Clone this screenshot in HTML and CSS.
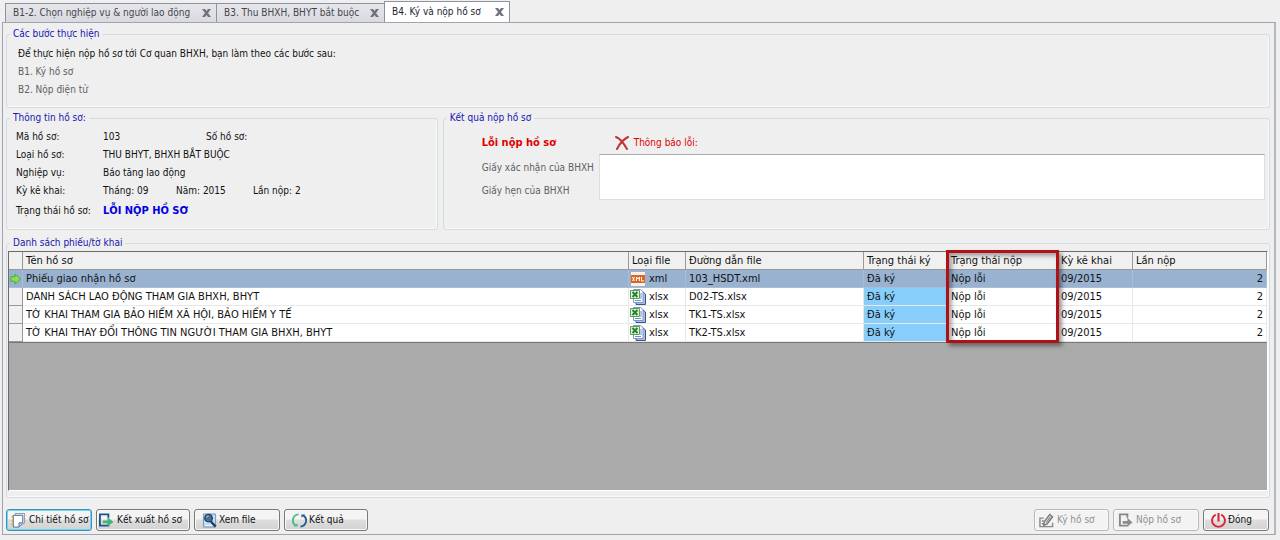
FILE: index.html
```html
<!DOCTYPE html>
<html lang="vi">
<head>
<meta charset="utf-8">
<title>Ký và nộp hồ sơ</title>
<link rel="stylesheet" href="styles.css">
</head>
<body>
<svg class="defs" aria-hidden="true">
  <symbol id="close" viewBox="0 0 9 8"><path d="M0 0h3l1.500 2L6 0h3L6 4l3 4H6L4.500 6 3 8H0l3-4z" fill="#70737f"/></symbol>
  <symbol id="excel" viewBox="0 0 16 16">
    <path d="M6 3h7l2.500 2v10.500H6z" fill="#a9bfe4" stroke="#35578f"/><path d="M3.500.5h7l2.500 2v11H3.500z" fill="#fff" stroke="#7f98c2"/>
    <path d="M10 5h2M10 7h2M10 9h2M5 11.500h6" stroke="#6d8fcb"/><path d="M.5 1.500h9v8h-9z" fill="#e3f2df" stroke="#5c9d55"/>
    <path d="M2.500 3l5 5M7.500 3l-5 5" stroke="#25822c" stroke-width="2"/>
  </symbol>
  <symbol id="xml" viewBox="0 0 16 16">
    <path d="M1 1h14v14H1z" fill="#f6f1ec"/><path d="M1 4h14v8H1z" fill="#e2631b"/>
    <path d="M2.500 6l2 4M4.500 6l-2 4M6.500 10V6l1.500 2 1.500-2v4M11.500 6v4H14" fill="none" stroke="#fff"/>
  </symbol>
</svg>
<main class="window">
  <nav class="tabs">
    <div class="tab"><a href="#b1">B1-2. Chọn nghiệp vụ &amp; người lao động</a><button class="tab-close" aria-label="Đóng thẻ B1-2"><svg><use href="#close"/></svg></button></div>
    <div class="tab"><a href="#b3">B3. Thu BHXH, BHYT bắt buộc</a><button class="tab-close" aria-label="Đóng thẻ B3"><svg><use href="#close"/></svg></button></div>
    <div class="tab active"><a href="#b4" aria-current="page">B4. Ký và nộp hồ sơ</a><button class="tab-close" aria-label="Đóng thẻ B4"><svg><use href="#close"/></svg></button></div>
  </nav>
  <section class="panel">
    <fieldset class="group steps">
      <legend>Các bước thực hiện</legend>
      <p class="intro">Để thực hiện nộp hồ sơ tới Cơ quan BHXH, bạn làm theo các bước sau:</p>
      <p>B1. Ký hồ sơ</p>
      <p>B2. Nộp điện tử</p>
    </fieldset>
    <div class="columns">
      <fieldset class="group info">
        <legend>Thông tin hồ sơ:</legend>
        <dl class="facts">
          <dt>Mã hồ sơ:</dt><dd class="number"><span>103</span><span>Số hồ sơ:</span></dd>
          <dt>Loại hồ sơ:</dt><dd>THU BHYT, BHXH BẮT BUỘC</dd>
          <dt>Nghiệp vụ:</dt><dd>Báo tăng lao động</dd>
          <dt>Kỳ kê khai:</dt><dd class="period"><span>Tháng: 09</span><span>Năm: 2015</span><span>Lần nộp: 2</span></dd>
          <dt>Trạng thái hồ sơ:</dt><dd class="status">LỖI NỘP HỒ SƠ</dd>
        </dl>
      </fieldset>
      <fieldset class="group result">
        <legend>Kết quả nộp hồ sơ</legend>
        <div class="result-grid">
          <strong class="failure">Lỗi nộp hồ sơ</strong>
          <label class="error-label" for="error"><svg viewBox="0 0 14 14"><path d="M1 1c3 1 7 5 11 12M13 1C9 3 5 7 2 13" fill="none" stroke="#bd3338" stroke-width="2" stroke-linecap="round"/></svg>Thông báo lỗi:</label>
          <span>Giấy xác nhận của BHXH</span>
          <textarea id="error"></textarea>
          <span>Giấy hẹn của BHXH</span>
        </div>
      </fieldset>
    </div>
    <section class="group list">
      <h2>Danh sách phiếu/tờ khai</h2>
      <div class="grid">
        <table>
          <colgroup><col class="c-mark"><col><col class="c-type"><col class="c-path"><col class="c-sign"><col class="c-send"><col class="c-term"><col class="c-count"></colgroup>
          <thead><tr><th></th><th>Tên hồ sơ</th><th>Loại file</th><th>Đường dẫn file</th><th>Trạng thái ký</th><th class="marked">Trạng thái nộp<span class="highlight"></span></th><th>Kỳ kê khai</th><th>Lần nộp</th></tr></thead>
          <tbody>
            <tr class="selected"><td><svg class="arrow" viewBox="0 0 12 12"><path d="M1 3.500h4.500v-3L11.500 6l-6 5.500v-3H1z" fill="#8cdc5c" stroke="#48a832"/></svg></td><td>Phiếu giao nhận hồ sơ</td><td><svg class="file"><use href="#xml"/></svg>xml</td><td>103_HSDT.xml</td><td>Đã ký</td><td>Nộp lỗi</td><td>09/2015</td><td>2</td></tr>
            <tr><td></td><td>DANH SÁCH LAO ĐỘNG THAM GIA BHXH, BHYT</td><td><svg class="file"><use href="#excel"/></svg>xlsx</td><td>D02-TS.xlsx</td><td>Đã ký</td><td>Nộp lỗi</td><td>09/2015</td><td>2</td></tr>
            <tr><td></td><td>TỜ KHAI THAM GIA BẢO HIỂM XÃ HỘI, BẢO HIỂM Y TẾ</td><td><svg class="file"><use href="#excel"/></svg>xlsx</td><td>TK1-TS.xlsx</td><td>Đã ký</td><td>Nộp lỗi</td><td>09/2015</td><td>2</td></tr>
            <tr><td></td><td>TỜ KHAI THAY ĐỔI THÔNG TIN NGƯỜI THAM GIA BHXH, BHYT</td><td><svg class="file"><use href="#excel"/></svg>xlsx</td><td>TK2-TS.xlsx</td><td>Đã ký</td><td>Nộp lỗi</td><td>09/2015</td><td>2</td></tr>
          </tbody>
        </table>
      </div>
    </section>
    <footer class="actions">
      <button class="btn focused detail"><svg viewBox="0 0 16 16"><path d="M4.500 2V.5h10v10l-2 2" fill="#e8eaee" stroke="#8a929f"/><path d="M2.500 2.500h10v8.500l-4 4h-6z" fill="#fff" stroke="#3f6ba6"/><path d="M12.500 10.500h-4v4" fill="#c9dcf2" stroke="#3f6ba6"/><path d="M1.500 3v11" stroke="#e2a83d" stroke-width="2" stroke-dasharray="2 2"/></svg>Chi tiết hồ sơ</button>
      <button class="btn export"><svg viewBox="0 0 16 16"><path d="M10 5V1.500H1v12h9V12" fill="none" stroke="#1c5789" stroke-width="2"/><path d="M4 8h5V4.500L15.500 9.500 9 14v-3H4z" fill="#43b478"/></svg>Kết xuất hồ sơ</button>
      <button class="btn view"><svg viewBox="0 0 16 16"><path d="M1.500 1h13v14h-13z" fill="#b9d4ed" stroke="#7196b7"/><path d="M3 4h10M3 7h10M3 10h10M3 13h10" stroke="#fff"/><circle cx="7" cy="5.500" r="4" fill="#416fa0" stroke="#273f5c" stroke-width="1.500"/><path d="M5 5a2 2 0 0 1 2-2" fill="none" stroke="#c8e5fb"/><path d="M9.500 9l5 5.500" stroke="#263d59" stroke-width="2.500"/></svg>Xem file</button>
      <button class="btn outcome"><svg viewBox="0 0 16 16"><path d="M7 1.500A6.500 6.500 0 0 0 4 13.500" fill="none" stroke="#4cbc83" stroke-width="2"/><path d="M9 14.500A6.500 6.500 0 0 0 12 2.500" fill="none" stroke="#285c9c" stroke-width="2"/><path d="M2 14.500h4V11z" fill="#4cbc83"/><path d="M14 1.500h-4V5z" fill="#285c9c"/></svg>Kết quả</button>
      <span class="spacer"></span>
      <button class="btn sign" disabled><svg viewBox="0 0 16 16"><path d="M5 5.500H1v9h13.500v-4M3 8.500h2M3 11.500h2" fill="none" stroke="#888" stroke-width="1.500"/><path d="M5.500 9.500l6-8 3 2.500-6 8-3.500 1z" fill="#ddd" stroke="#777" stroke-width="1.500"/><path d="M8 10l4-6" stroke="#777"/></svg>Ký hồ sơ</button>
      <button class="btn send" disabled><svg viewBox="0 0 16 16"><path d="M10 5V1.500H2v12h8V13" fill="none" stroke="#888" stroke-width="2"/><path d="M5 8.500h5V5l5.500 5L10 14.500v-3H5z" fill="#8c8c8c"/></svg>Nộp hồ sơ</button>
      <button class="btn quit"><svg viewBox="0 0 14 14"><path d="M4.500 1.500a6 6 0 1 0 5 0" fill="none" stroke="#dc2638" stroke-width="1.800"/><path d="M7 0v8" stroke="#dc2638" stroke-width="2"/></svg>Đóng</button>
    </footer>
  </section>
</main>
</body>
</html>
```
FILE: styles.css
```css
* { box-sizing: border-box; }
body {
  margin: 0;
  background: #efefef;
  color: #111;
  font: 10px/14px "DejaVu Sans Condensed", Tahoma, sans-serif;
}
p, dl, dd { margin: 0; }
button, textarea { font: inherit; }
.defs { position: absolute; width: 0; height: 0; }
.window { display: flex; flex-direction: column; min-height: 100vh; padding: 1px 4px 5px 2px; }

.tabs { display: flex; align-items: flex-end; height: 21px; padding-left: 3px; }
.tab {
  display: flex; align-items: center; justify-content: space-between;
  width: 211px; height: 19px; padding: 0 31px 0 7px;
  border: 1px solid #8d93a3; border-bottom: 0; border-right: 0;
  background: linear-gradient(#e6e6ea, #d9dae0);
  white-space: nowrap;
}
.tab { padding-right: 5px; }
.tab + .tab { width: 168px; }
.tab a { color: #44454d; text-decoration: none; }
.tab + .active { width: 126px; height: 21px; border-right: 1px solid #8d93a3; background: #fff; }
.active a { color: #1c2430; }
.tab-close { display: flex; margin-left: auto; padding: 0; border: 0; background: none; }
.tab-close svg { width: 9px; height: 8px; }

.panel {
  display: flex; flex: 1; flex-direction: column;
  padding: 4px 4px 3px 3px;
  border: 1px solid #a0a3b0; border-right: 2px solid #b4b6c0;
}
.group { min-width: 0; margin: 0; padding: 0; border: 1px solid #d3dce1; border-radius: 3px; box-shadow: inset -1px -1px #fafafa; }
.group legend { margin-left: 3px; padding: 0 3px; color: #1616b0; }

.steps { padding: 4px 11px 8px; color: #606060; line-height: 18px; }
.steps legend { margin-left: -8px; line-height: 14px; }
.intro { color: #111; }

.columns { display: grid; grid-template-columns: 432fr 828fr; gap: 5px; margin-top: 3px; }
.facts {
  display: grid; grid-template-columns: 87px 1fr; grid-template-rows: 19px 18px 18px 18px 22px; align-items: center;
  padding: 2px 9px 7px; white-space: nowrap;
}
.number, .period { display: grid; grid-template-columns: 103px 1fr; }
.period { grid-template-columns: 73px 77px 1fr; }
.status { color: #0000e0; font-size: 11px; font-weight: bold; }

.result-grid {
  display: grid; grid-template-columns: 117px 1fr; grid-template-rows: 23px 23px 23px; align-items: center;
  padding: 6px 4px 7px 38px; color: #606060; white-space: nowrap;
}
.result-grid span { padding-top: 4px; }
.failure { color: #e00000; font-size: 11px; }
.error-label { display: flex; align-items: center; gap: 5px; padding-left: 16px; color: #e00000; }
.error-label svg { width: 14px; height: 14px; }
.result-grid textarea {
  grid-area: 2 / 2 / 4 / 3; align-self: stretch; width: 100%; height: 100%; min-height: 0;
  border: 1px solid #dedede; border-top-color: #aaa; background: #fff; resize: none;
}

.list { display: flex; flex: 1; flex-direction: column; margin-top: 13px; padding: 0 1px 6px; }
.list h2 { align-self: flex-start; margin: -8px 0 1px 2px; padding: 0 3px; background: #efefef; color: #1616b0; font: inherit; }
.grid { flex: 1; border: 1px solid #6b6b6b; border-right-color: #fff; border-bottom-color: #fff; background: #aaa; }
table { width: 100%; border-collapse: separate; border-spacing: 0; table-layout: fixed; border-bottom: 1px solid #777; font-size: 11px; }
.c-mark { width: 14px; }
.c-type { width: 57px; }
.c-path { width: 178px; }
.c-sign { width: 84px; }
.c-send { width: 110px; }
.c-term { width: 75px; }
.c-count { width: 134px; }
th, td { height: 18px; padding: 0 3px; border-right: 1px solid #e8e8e8; border-bottom: 1px solid #e8e8e8; text-align: left; white-space: nowrap; font-weight: normal; line-height: 16px; }
th { border-color: #999; background: #f0f0f0; }
td { background: #fff; }
td:first-child { padding: 0 1px; border-color: #999; background: #f0f0f0; }
td:nth-child(5) { background: #87cefa; }
td:last-child { text-align: right; }
.selected td, .selected td:first-child, .selected td:nth-child(5) { border-color: #a9bdd6; background: #98b2d0; }
.arrow { display: block; width: 11px; height: 12px; }
.file { width: 16px; height: 16px; margin: 0 3px 0 -2px; vertical-align: top; }
.marked { position: relative; }
.highlight {
  position: absolute; inset: -2px -2px auto -2px; height: 93px;
  border: 3px solid #b01116; box-shadow: 3px 3px 4px #0006, inset 3px 3px 4px #0005;
}

.actions { display: flex; gap: 4px; margin-top: 11px; padding: 0 1px 0 0; }
.btn {
  display: flex; align-items: center; gap: 3px; width: 86px; height: 22px; padding: 0 4px;
  border: 1px solid #777; border-radius: 3px;
  background: linear-gradient(#f4f4f4 45%, #dedede 50%, #d2d2d2);
  box-shadow: inset 0 0 0 1px #fafafa; color: #111; white-space: nowrap;
}
.btn svg { flex: none; width: 15px; height: 15px; }
.btn.focused { border-color: #3b94b8; box-shadow: inset 0 0 0 1px #74d3ef; }
.btn:disabled { border-color: #b8b8b8; background: #f3f3f3; color: #909090; }
.export { width: 94px; padding: 0 2px; }
.view, .outcome, .quit { padding-left: 7px; gap: 2px; }
.outcome { width: 84px; }
.sign { width: 75px; }
.quit { width: 66px; }
.spacer { flex: 1; }
```
